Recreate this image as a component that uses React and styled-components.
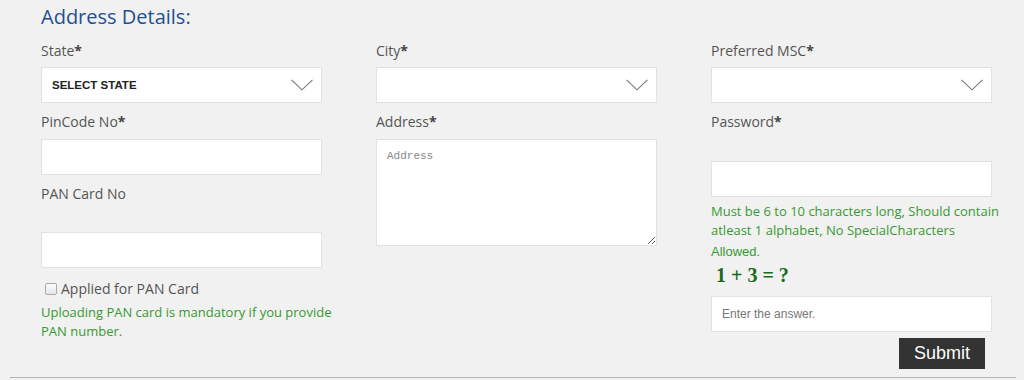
import React from 'react';
import styled, { createGlobalStyle } from 'styled-components';

const GlobalStyle = createGlobalStyle`
  html, body {
    margin: 0;
    background: #f1f1f1;
  }
  body {
    font-family: 'Open Sans', 'Liberation Sans', sans-serif;
    font-size: 14px;
    color: #555;
  }
`;

const Section = styled.section`
  margin: 0 8px 0 10px;
  height: 378px;
  box-sizing: border-box;
  padding: 3px 0 0 31px;
  border-bottom: 1px solid #b4b4b4;
`;

const Title = styled.h2`
  margin: 0 0 10px;
  font-size: 20px;
  line-height: 28px;
  font-weight: 500;
  color: #1f4f93;
`;

const Grid = styled.div`
  display: grid;
  grid-template-columns: repeat(3, 281px);
  column-gap: 54px;
  align-items: start;
`;

const Column = styled.div`
  display: flex;
  flex-direction: column;
`;

const Field = styled.div`
  display: flex;
  flex-direction: column;
  margin-bottom: ${({ $last }) => ($last ? 0 : 9)}px;
`;

const Label = styled.label`
  display: block;
  height: 20px;
  line-height: 20px;
  font-size: 14px;
  color: #555;
  margin-bottom: ${({ $gap }) => $gap || 6}px;
`;

const Star = styled.span`
  font-weight: 700;
  color: #444;
`;

const boxStyle = `
  box-sizing: border-box;
  width: 100%;
  height: 36px;
  border: 1px solid #e2e2e2;
  background: #fff;
  outline: none;
  margin: 0;
`;

const SelectWrap = styled.div`
  position: relative;
  width: 100%;
`;

const Select = styled.select`
  ${boxStyle}
  appearance: none;
  padding: 0 40px 0 10px;
  font-family: 'Liberation Sans', Arial, sans-serif;
  font-size: 11.5px;
  font-weight: 700;
  color: #222;
`;

const Chevron = styled.svg`
  position: absolute;
  right: 9px;
  top: 12px;
  pointer-events: none;
`;

const Input = styled.input`
  ${boxStyle}
  padding: 0 10px;
  font-family: 'Liberation Sans', Arial, sans-serif;
  font-size: 12px;
  color: #333;

  &::placeholder {
    color: #777;
  }
`;

const TextArea = styled.textarea`
  ${boxStyle}
  height: 107px;
  padding: 10px 10px;
  font-family: 'Liberation Mono', monospace;
  font-size: 11px;
  resize: vertical;

  &::placeholder {
    color: #888;
  }
`;

const CheckRow = styled.label`
  display: flex;
  align-items: center;
  margin-top: 10px;
  height: 20px;
  font-size: 14px;
  color: #555;
`;

const CheckBox = styled.input`
  appearance: none;
  box-sizing: border-box;
  margin: 1px 4px 0 4px;
  width: 12px;
  height: 12px;
  border: 1px solid #a9a9a9;
  border-radius: 2px;
  background: linear-gradient(#fcfcfc, #e6e6e6);
`;

const Hint = styled.p`
  margin: ${({ $top }) => $top || 0}px -30px 0 0;
  font-family: ${({ $arial }) =>
    $arial ? "'Liberation Sans', Arial, sans-serif" : "'Open Sans', sans-serif"};
  font-size: 13px;
  line-height: 18.5px;
  color: #379a30;
`;

const Captcha = styled.div`
  margin: 2px 0 0;
  padding-left: 5px;
  font-family: 'Liberation Serif', 'Times New Roman', serif;
  font-weight: 700;
  font-size: 20px;
  line-height: 22px;
  color: #176a1c;
`;

const AnswerInput = styled(Input)`
  margin-top: 10px;
`;

const Actions = styled.div`
  display: flex;
  justify-content: flex-end;
  padding-right: 7px;
  margin-top: 6px;
`;

const SubmitButton = styled.button`
  width: 86px;
  height: 31px;
  border: none;
  background: #333;
  color: #fff;
  font-family: 'Liberation Sans', Arial, sans-serif;
  font-size: 18px;
  padding: 0;
  cursor: pointer;
`;

const FieldLabel = ({ text, required, gap }) => (
  <Label $gap={gap}>
    {text}
    {required && <Star>*</Star>}
  </Label>
);

const SelectField = ({ label, placeholder }) => (
  <Field>
    <FieldLabel text={label} required />
    <SelectWrap>
      <Select defaultValue="">
        <option value="">{placeholder || ''}</option>
      </Select>
      <Chevron width="22" height="12" viewBox="0 0 22 12">
        <path d="M0.5 0.8 L11 10.8 L21.5 0.8" fill="none" stroke="#777" strokeWidth="1.1" />
      </Chevron>
    </SelectWrap>
  </Field>
);

const App = () => (
  <>
    <GlobalStyle />
    <Section>
      <Title>Address Details:</Title>
      <Grid>
        <Column>
          <SelectField label="State" placeholder="SELECT STATE" />
          <Field>
            <FieldLabel text="PinCode No" required gap={7} />
            <Input type="text" />
          </Field>
          <Field $last>
            <FieldLabel text="PAN Card No" gap={28} />
            <Input type="text" />
          </Field>
          <CheckRow>
            <CheckBox type="checkbox" />
            Applied for PAN Card
          </CheckRow>
          <Hint $top={5}>
            Uploading PAN card is mandatory if you provide PAN number.
          </Hint>
        </Column>

        <Column>
          <SelectField label="City" />
          <Field>
            <FieldLabel text="Address" required gap={7} />
            <TextArea placeholder="Address" />
          </Field>
        </Column>

        <Column>
          <SelectField label="Preferred MSC" />
          <Field $last>
            <FieldLabel text="Password" required gap={29} />
            <Input type="password" />
          </Field>
          <Hint $top={5}>
            Must be 6 to 10 characters long, Should contain atleast 1 alphabet, No SpecialCharacters
          </Hint>
          <Hint $top={4} $arial>Allowed.</Hint>
          <Captcha>1 + 3 = ?</Captcha>
          <AnswerInput type="text" placeholder="Enter the answer." />
          <Actions>
            <SubmitButton type="button">Submit</SubmitButton>
          </Actions>
        </Column>
      </Grid>
    </Section>
  </>
);

export default App;
